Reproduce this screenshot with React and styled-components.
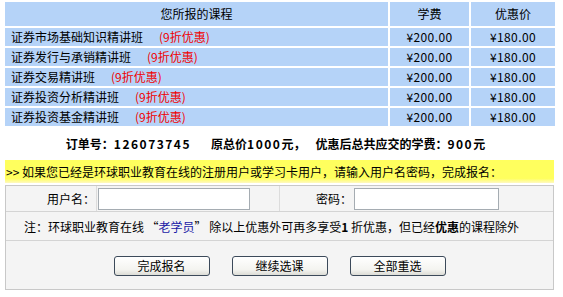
import React from "react";
import styled, { createGlobalStyle } from "styled-components";

const Global = createGlobalStyle`
  html, body { margin: 0; padding: 0; background: #fff; }
  body { font-family: "Noto Sans CJK SC", "DejaVu Sans", sans-serif; font-size: 12px; color: #000; }
  * { box-sizing: border-box; }
`;

const Page = styled.div`
  width: 563px;
  padding: 2px 9px 0 5px;
`;

const CourseGrid = styled.div`
  display: grid;
  grid-template-columns: 383px 79px 84px;
  grid-auto-rows: 18px;
  grid-template-rows: 24px;
  gap: 2px 2px;
`;

const Cell = styled.div`
  background: #b5d3f8;
  display: flex;
  align-items: center;
  justify-content: ${(p) => (p.$left ? "flex-start" : "center")};
  padding-left: ${(p) => (p.$left ? "6px" : "0")};
  line-height: 1;
  white-space: nowrap;
`;

const Discount = styled.span`
  color: #f00000;
  margin-left: 16px;
`;

const Price = styled.span`
  letter-spacing: 0.4px;
`;

const OrderLine = styled.div`
  height: 34px;
  display: flex;
  align-items: center;
  justify-content: center;
  font-weight: bold;
  font-size: 12px;
  white-space: nowrap;
  padding-right: 8px;
`;

const Num = styled.span`
  letter-spacing: 1.5px;
`;

const Gap = styled.span`
  display: inline-block;
  width: ${(p) => p.$w}px;
`;

const Notice = styled.div`
  height: 23px;
  background: linear-gradient(to bottom, #ffff5e 0%, #ffff5e 80%, #fff9c0 100%);
  display: flex;
  align-items: center;
  padding-left: 1px;
  white-space: nowrap;
`;

const Form = styled.div`
  margin-top: 2px;
  border: 1px solid #c8c8c8;
  background: #f4f4f4;
`;

const InputRow = styled.div`
  display: grid;
  grid-template-columns: 90px 183px 74px 1fr;
  height: 26px;
  border-bottom: 1px solid #d4d4d4;
`;

const FieldCell = styled.div`
  display: flex;
  align-items: center;
  justify-content: ${(p) => (p.$label ? "flex-end" : "flex-start")};
  padding: ${(p) => (p.$label ? "0 1px 0 0" : "0 0 0 1px")};
  border-left: ${(p) => (p.$divider ? "1px solid #dcdcdc" : "none")};
`;

const TextInput = styled.input`
  width: ${(p) => p.$w}px;
  height: 22px;
  border: 1px solid #a5acb2;
  background: #fff;
  padding: 0;
  margin: 0;
  font: inherit;
`;

const NoteRow = styled.div`
  height: 29px;
  display: flex;
  align-items: center;
  justify-content: center;
  border-bottom: 1px solid #d4d4d4;
  white-space: nowrap;
  padding-right: 16px;
`;

const OldStudent = styled.span`
  color: #1a1aa6;
`;

const ButtonRow = styled.div`
  height: 48px;
  display: flex;
  justify-content: center;
  align-items: flex-start;
  padding-top: 15px;
  gap: 22px;
`;

const Button = styled.button`
  width: 96px;
  height: 20px;
  border: 1px solid #3c4a5a;
  border-radius: 3px;
  background: linear-gradient(to bottom, #ffffff 0%, #f4f4f0 70%, #dcdcd6 100%);
  font-family: "Noto Sans CJK SC", sans-serif;
  font-size: 12px;
  color: #000;
  padding: 0;
  line-height: 1;
`;

const courses = [
  "证券市场基础知识精讲班",
  "证券发行与承销精讲班",
  "证券交易精讲班",
  "证券投资分析精讲班",
  "证券投资基金精讲班",
];

export default function App() {
  return (
    <>
      <Global />
      <Page>
        <CourseGrid>
          <Cell>您所报的课程</Cell>
          <Cell>学费</Cell>
          <Cell>优惠价</Cell>
          {courses.map((c) => (
            <React.Fragment key={c}>
              <Cell $left>
                {c}
                <Discount>(9折优惠)</Discount>
              </Cell>
              <Cell>
                <Price>¥200.00</Price>
              </Cell>
              <Cell>
                <Price>¥180.00</Price>
              </Cell>
            </React.Fragment>
          ))}
        </CourseGrid>
        <OrderLine>
          订单号：<Num>126073745</Num>
          <Gap $w={20} />原总价<Num>1000</Num>元，<Gap $w={10} />优惠后总共应交的学费：<Num>900</Num>元
        </OrderLine>
        <Notice>&gt;&gt; 如果您已经是环球职业教育在线的注册用户或学习卡用户，请输入用户名密码，完成报名：</Notice>
        <Form>
          <InputRow>
            <FieldCell $label>用户名：</FieldCell>
            <FieldCell $divider>
              <TextInput type="text" $w={152} />
            </FieldCell>
            <FieldCell $label $divider>密码：</FieldCell>
            <FieldCell>
              <TextInput type="password" $w={145} />
            </FieldCell>
          </InputRow>
          <NoteRow>
            注：环球职业教育在线 “<OldStudent>老学员</OldStudent>” 除以上优惠外可再多享受<b>1</b>&nbsp;折优惠，但已经<b>优惠</b>的课程除外
          </NoteRow>
          <ButtonRow>
            <Button type="button">完成报名</Button>
            <Button type="button">继续选课</Button>
            <Button type="button">全部重选</Button>
          </ButtonRow>
        </Form>
      </Page>
    </>
  );
}
